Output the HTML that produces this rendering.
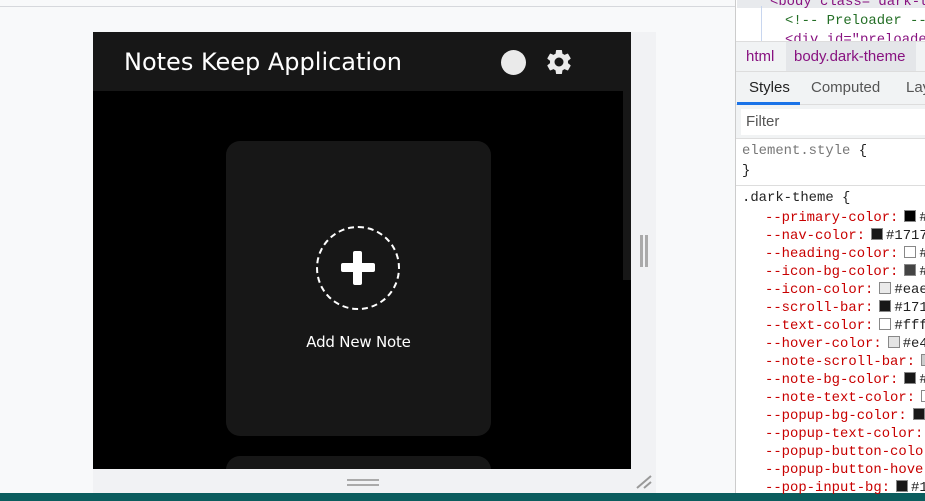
<!DOCTYPE html>
<html><head><meta charset="utf-8"><style>
*{margin:0;padding:0;box-sizing:border-box}
body{width:925px;height:501px;overflow:hidden;background:#f8f9fa;position:relative;font-family:"DejaVu Sans","Liberation Sans",sans-serif}
.abs{position:absolute}
.mono{font-family:"Liberation Mono","DejaVu Sans Mono",monospace;font-size:13.9px;white-space:nowrap}
.p{position:absolute;left:765px;color:#c80000;line-height:18px}
.p i{display:inline-block;width:12px;height:12px;border:1px solid #888;vertical-align:-1px;margin:0 3px 0 6px}
.p b{font-weight:normal;color:#222}
.ui{font-family:'Liberation Sans',sans-serif;font-size:15px}
</style></head><body>
<div class="abs" style="left:0;top:6px;width:736px;height:1px;background:#d6d8dc"></div>
<div class="abs" style="left:93px;top:32px;width:563px;height:461px;background:#f1f2f4"></div>
<div class="abs" style="left:93px;top:32px;width:538px;height:437px;background:#000;overflow:hidden">
  <div class="abs" style="left:0;top:0;width:538px;height:59px;background:#171717"></div>
  <div class="abs" style="left:31px;top:16px;color:#fff;font-size:24px;white-space:nowrap">Notes Keep Application</div>
  <div class="abs" style="left:408px;top:18px;width:25px;height:25px;border-radius:50%;background:#eaeaea"></div>
  <svg class="abs" style="left:451px;top:15px" width="30" height="30" viewBox="0 0 24 24"><path fill="#eaeaea" d="M19.14 12.94c.04-.3.06-.61.06-.94 0-.32-.02-.64-.07-.94l2.03-1.58a.49.49 0 0 0 .12-.61l-1.920-3.32a.49.49 0 0 0-.59-.22l-2.39.96c-.5-.38-1.030-.7-1.62-.94l-.36-2.540a.48.48 0 0 0-.48-.41h-3.84c-.24 0-.43.17-.47.41l-.36 2.54c-.59.24-1.13.57-1.62.94l-2.39-.96a.48.48 0 0 0-.59.22L2.74 8.87c-.12.21-.08.47.12.61l2.03 1.58c-.05.3-.09.63-.09.94s.02.64.07.94l-2.03 1.58a.49.49 0 0 0-.12.61l1.92 3.32c.12.22.37.29.59.22l2.39-.96c.5.38 1.03.7 1.62.94l.36 2.54c.05.24.24.41.48.41h3.84c.24 0 .44-.17.47-.41l.36-2.54c.59-.24 1.13-.56 1.62-.94l2.39.96c.22.08.47 0 .59-.22l1.92-3.32c.12-.22.07-.47-.12-.61l-2.010-1.58zM12 15.6A3.6 3.6 0 1 1 12 8.4a3.6 3.6 0 0 1 0 7.2z"/></svg>
  <div class="abs" style="left:530px;top:59px;width:8px;height:189px;background:#171717"></div>
  <div class="abs" style="left:133px;top:109px;width:265px;height:295px;background:#171717;border-radius:14px"></div>
  <div class="abs" style="left:223px;top:194px;width:84px;height:84px;border-radius:50%;border:2px dashed #fff"></div>
  <div class="abs" style="left:248px;top:231px;width:34px;height:9px;background:#fff;border-radius:2px"></div>
  <div class="abs" style="left:260px;top:219px;width:9px;height:34px;background:#fff;border-radius:2px"></div>
  <div class="abs" style="left:133px;top:301px;width:265px;text-align:center;color:#fff;font-size:15px;font-family:'DejaVu Sans',sans-serif;letter-spacing:-0.2px">Add New Note</div>
  <div class="abs" style="left:133px;top:424px;width:265px;height:60px;background:#171717;border-radius:14px"></div>
</div>
<div class="abs" style="left:640px;top:235px;width:3px;height:32px;background:#aaa"></div>
<div class="abs" style="left:645px;top:235px;width:3px;height:32px;background:#aaa"></div>
<div class="abs" style="left:347px;top:479px;width:32px;height:2px;background:#aaa"></div>
<div class="abs" style="left:347px;top:484px;width:32px;height:2px;background:#aaa"></div>
<svg class="abs" style="left:636px;top:474px" width="18" height="16"><path d="M1 14L15 2M8 14L15 8" stroke="#999" stroke-width="2"/></svg>
<div class="abs" style="left:0;top:493px;width:925px;height:8px;background:#0b5d5e"></div>
<!-- devtools -->
<div class="abs" style="left:735px;top:0;width:190px;height:493px;background:#fff;border-left:1px solid #ccc"></div>
<div class="abs" style="left:737px;top:0;width:188px;height:8px;background:#e8eaed"></div>
<div class="abs" style="left:761px;top:6px;width:1px;height:35px;background:#c8d6ef"></div>
<div class="abs mono" style="left:770px;top:-6px;color:#881280">&lt;body class="dark-t</div>
<div class="abs mono" style="left:785px;top:13px;color:#236e25">&lt;!-- Preloader --</div>
<div class="abs mono" style="left:785px;top:32px;color:#881280">&lt;div id="preloade</div>
<div class="abs" style="left:736px;top:41px;width:189px;height:31px;background:#f1f3f4;border-top:1px solid #ddd;border-bottom:1px solid #ddd"></div>
<div class="abs" style="left:786px;top:42px;width:130px;height:29px;background:#e4e6e9"></div>
<div class="abs ui" style="left:746px;top:48px;color:#881280">html</div>
<div class="abs ui" style="left:794px;top:48px;color:#881280">body.dark-theme</div>
<div class="abs" style="left:736px;top:72px;width:189px;height:33px;background:#f1f3f4;border-bottom:1px solid #ddd"></div>
<div class="abs ui" style="left:749px;top:79px;color:#222">Styles</div>
<div class="abs ui" style="left:811px;top:79px;color:#555">Computed</div>
<div class="abs ui" style="left:906px;top:79px;color:#555">Lay</div>
<div class="abs" style="left:737px;top:102px;width:63px;height:3px;background:#1a73e8"></div>
<div class="abs" style="left:736px;top:105px;width:189px;height:34px;background:#f1f3f4;border-bottom:1px solid #ddd"></div>
<div class="abs" style="left:741px;top:109px;width:184px;height:26px;background:#fff"></div>
<div class="abs ui" style="left:746px;top:113px;color:#555">Filter</div>
<div class="abs mono" style="left:742px;top:142px;color:#777;line-height:18px">element.style <b style="font-weight:normal;color:#222">{</b></div>
<div class="abs mono" style="left:742px;top:162px;color:#222;line-height:18px">}</div>
<div class="abs" style="left:736px;top:185px;width:189px;height:1px;background:#ddd"></div>
<div class="abs mono" style="left:742px;top:189px;color:#222;line-height:18px">.dark-theme {</div>
<div class="mono">
<div class="p" style="top:209px">--primary-color:<i style="background:#000"></i><b>#</b></div>
<div class="p" style="top:227px">--nav-color:<i style="background:#171717"></i><b>#1717</b></div>
<div class="p" style="top:245px">--heading-color:<i style="background:#fff"></i><b>#</b></div>
<div class="p" style="top:263px">--icon-bg-color:<i style="background:#444"></i><b>#</b></div>
<div class="p" style="top:281px">--icon-color:<i style="background:#eaeaea"></i><b>#eae</b></div>
<div class="p" style="top:299px">--scroll-bar:<i style="background:#171717"></i><b>#171</b></div>
<div class="p" style="top:317px">--text-color:<i style="background:#fff"></i><b>#fff</b></div>
<div class="p" style="top:335px">--hover-color:<i style="background:#e4e4e4"></i><b>#e4</b></div>
<div class="p" style="top:353px">--note-scroll-bar:<i style="background:#ccc"></i></div>
<div class="p" style="top:371px">--note-bg-color:<i style="background:#171717"></i><b>#</b></div>
<div class="p" style="top:389px">--note-text-color:<i style="background:#fff"></i></div>
<div class="p" style="top:407px">--popup-bg-color:<i style="background:#171717"></i></div>
<div class="p" style="top:425px">--popup-text-color:</div>
<div class="p" style="top:443px">--popup-button-color</div>
<div class="p" style="top:461px">--popup-button-hover</div>
<div class="p" style="top:479px">--pop-input-bg:<i style="background:#171717"></i><b>#1</b></div>
</div>
</body></html>
